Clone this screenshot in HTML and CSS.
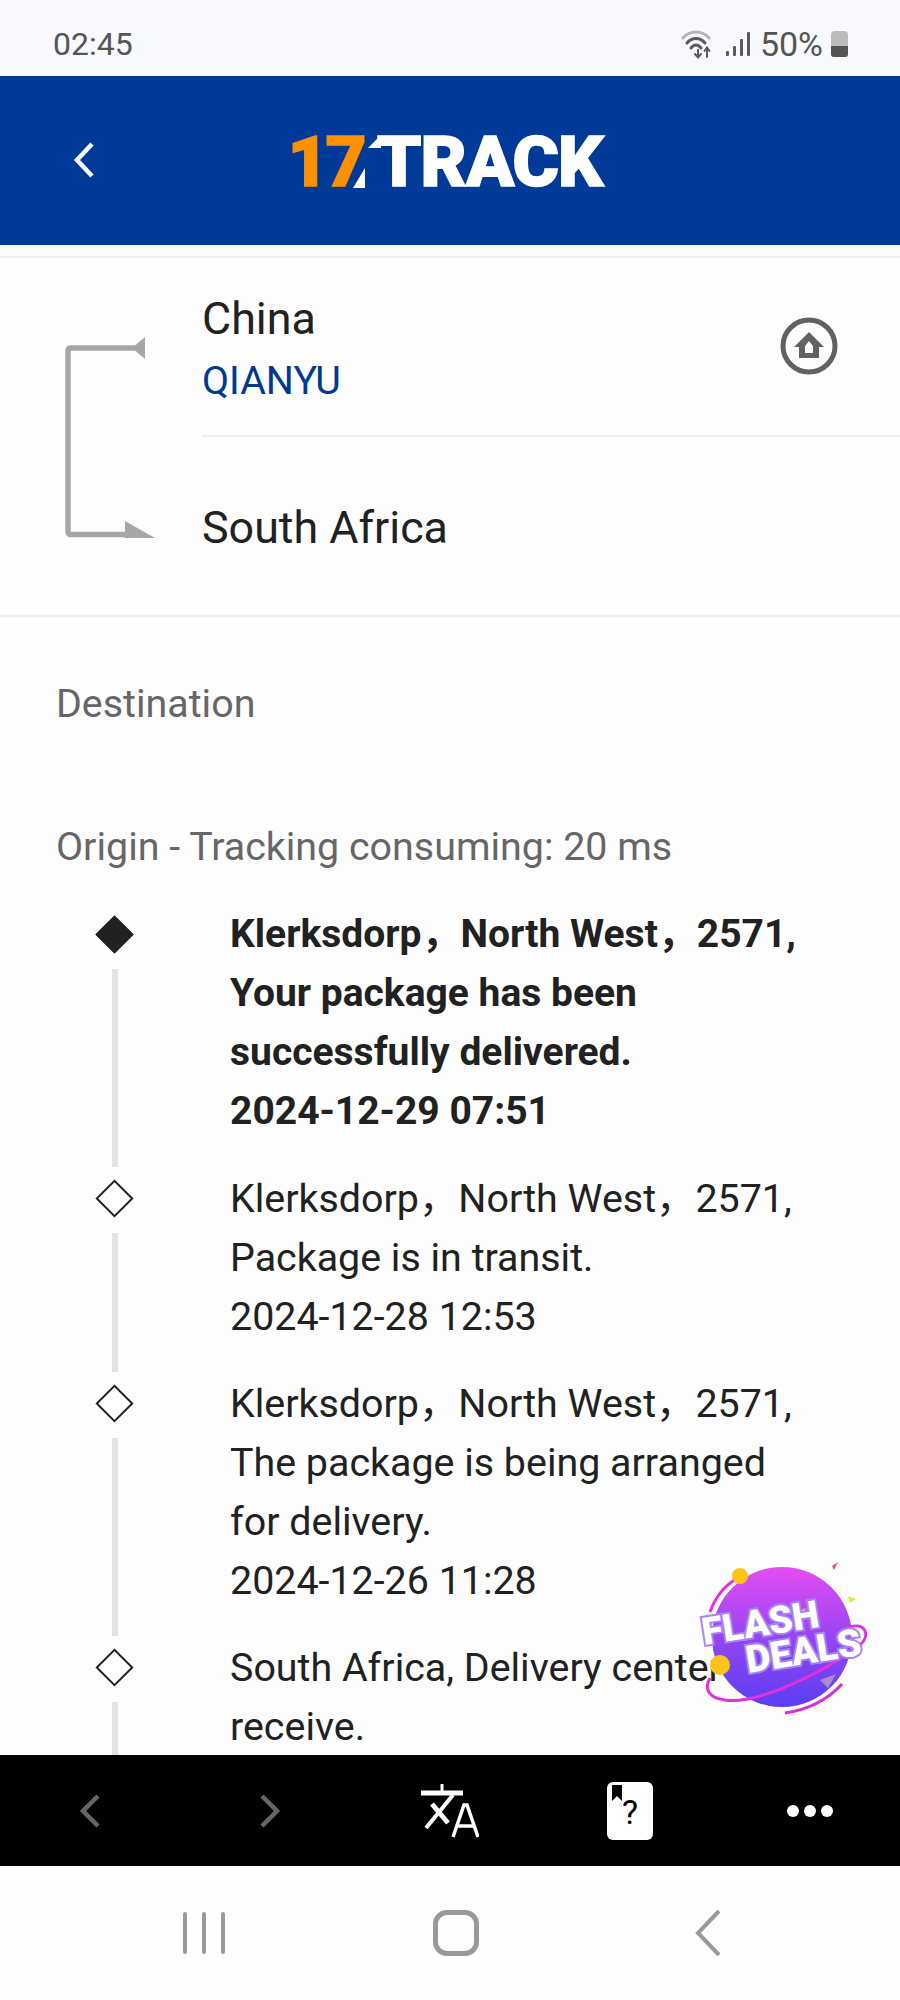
FILE: index.html
```html
<!DOCTYPE html>
<html lang="en">
<head>
    <meta charset="UTF-8">
    <meta name="viewport" content="width=device-width, initial-scale=1.0">
    <title>17TRACK</title>
    <link rel="stylesheet" href="styles.css">
</head>
<body>

<div class="app">
    <div class="status-bar">
        <span>02:45</span>
        <div class="status-icons">
            <svg class="wifi" width="36" height="30" viewBox="0 0 36 30" fill="none" stroke-linecap="round">
                <path d="M2 9 C9 1 21 1 28 9" stroke="#b5b5b5" stroke-width="3"/>
                <path d="M6 14 C11 8 19 8 24 14" stroke="#5a5a5a" stroke-width="3"/>
                <path d="M10 19 C13 15 17 15 20 19" stroke="#5a5a5a" stroke-width="3"/>
                <path d="M17 21 V28 M14 25 L17 28.5 L20 25" stroke="#5a5a5a" stroke-width="2"/>
                <path d="M26 28 V19 M23.5 22 L26 18.5 L28.5 22" stroke="#5a5a5a" stroke-width="2"/>
            </svg>
            <svg class="signal" width="24" height="24" viewBox="0 0 24 24" fill="#5a5a5a">
                <rect x="0" y="19" width="3" height="5" rx="1"/>
                <rect x="7" y="14" width="3" height="10" rx="1"/>
                <rect x="14" y="7" width="3" height="17" rx="1"/>
                <rect x="21" y="0" width="3" height="24" rx="1"/>
            </svg>
            <span>50%</span>
            <div class="battery"><div class="battery-level"></div></div>
        </div>
    </div>

    <header class="top-bar">
        <svg class="top-back" width="22" height="36" viewBox="0 0 22 36" fill="none" stroke="#fff" stroke-width="4.5">
            <path d="M19 2 L4 18 L19 34"/>
        </svg>
        <div class="logo">
            <span class="logo-num">17</span><svg class="logo-slash" width="28" height="52" viewBox="0 0 28 52" fill="#fff"><path d="M0 52 L12 32 V52 Z"/><path d="M15 12 L27 0 H28 V12 Z"/></svg><span class="logo-name">TRACK</span>
        </div>
    </header>

    <main class="content">
        <div class="top-rule"></div>

        <section class="route">
            <svg class="route-arrow" width="98" height="210" viewBox="0 0 98 210" fill="#a6a5a8">
                <path d="M80 16 H13 Q10 16 10 19 V199.5 Q10 202.5 13 202.5 H80" fill="none" stroke="#a6a5a8" stroke-width="5.5"/>
                <path d="M74 16 L87 5 V27 Z"/>
                <path d="M67 189 L97 206 H67 Z"/>
            </svg>
            <div class="route-rows">
                <div class="route-row route-origin">
                    <div>
                        <div class="country">China</div>
                        <div class="carrier">QIANYU</div>
                    </div>
                    <svg class="home-icon" width="58" height="58" viewBox="0 0 58 58">
                        <circle cx="29" cy="29" r="26" fill="none" stroke="#616161" stroke-width="5"/>
                        <path d="M29 15 L44 30 H39 V41 H19 V30 H14 Z M25 29 V36 H33 V29 L29 24 Z" fill="#616161" fill-rule="evenodd"/>
                    </svg>
                </div>
                <div class="route-row route-dest">
                    <div class="country">South Africa</div>
                </div>
            </div>
        </section>

        <section class="tracking">
            <p class="tracking-label">Destination</p>
            <p class="tracking-label tracking-origin">Origin - Tracking consuming: 20 ms</p>

            <div class="timeline">
                <div class="event event-latest">
                    <div class="event-marker">
                        <div class="diamond-box"><div class="diamond"></div></div>
                        <div class="event-line"></div>
                    </div>
                    <div class="event-text">
                        Klerksdorp，North West，2571, Your package has been successfully delivered.
                        <span class="event-date">2024-12-29 07:51</span>
                    </div>
                </div>
                <div class="event">
                    <div class="event-marker">
                        <div class="diamond-box"><div class="diamond"></div></div>
                        <div class="event-line"></div>
                    </div>
                    <div class="event-text">
                        Klerksdorp，North West，2571, Package is in transit.
                        <span class="event-date">2024-12-28 12:53</span>
                    </div>
                </div>
                <div class="event">
                    <div class="event-marker">
                        <div class="diamond-box"><div class="diamond"></div></div>
                        <div class="event-line"></div>
                    </div>
                    <div class="event-text">
                        Klerksdorp，North West，2571, The package is being arranged for delivery.
                        <span class="event-date">2024-12-26 11:28</span>
                    </div>
                </div>
                <div class="event">
                    <div class="event-marker">
                        <div class="diamond-box"><div class="diamond"></div></div>
                        <div class="event-line"></div>
                    </div>
                    <div class="event-text">
                        South Africa, Delivery center receive.
                    </div>
                </div>
            </div>
        </section>
    </main>

    <svg class="flash-badge" width="240" height="200" viewBox="0 0 240 200" fill="none">
        <defs>
            <linearGradient id="planet" x1="0" y1="0" x2="0" y2="1">
                <stop offset="0" stop-color="#e44df2"/>
                <stop offset="0.55" stop-color="#8e44f2"/>
                <stop offset="1" stop-color="#5a3ff2"/>
            </linearGradient>
        </defs>
        <circle cx="122" cy="107" r="70" fill="url(#planet)"/>
        <path d="M190 97 C205 92 211 105 200 115 C160 145 95 175 65 170 C48 168 44 158 50 148" stroke="#e62ee0" stroke-width="3"/>
        <path d="M78 48 C65 55 55 68 50 82" stroke="#e62ee0" stroke-width="3"/>
        <path d="M125 183 Q160 178 182 154" stroke="#d42ee0" stroke-width="3"/>
        <path d="M172 36 L178 32 L174 40 Z" fill="#e0506a"/>
        <path d="M188 66 L196 69 L190 73 Z" fill="#f0e040"/>
        <path d="M140 80 L146 78 L143 88 Z" fill="#f0b060"/>
        <path d="M160 150 L176 144 L168 158 Z" fill="#b08ac8"/>
        <g class="flash-text">
            <text x="44" y="115" transform="rotate(-9 44 115)">FLASH</text>
            <text x="88" y="143" transform="rotate(-9 88 143)">DEALS</text>
        </g>
        <circle cx="80" cy="46" r="8" fill="#fcc419"/>
        <circle cx="60" cy="135" r="10" fill="#fcc419"/>
    </svg>

    <div class="toolbar">
        <div class="tool">
            <svg width="20" height="34" viewBox="0 0 20 34" fill="none" stroke="#666" stroke-width="4.5"><path d="M18 2 L3 17 L18 32"/></svg>
        </div>
        <div class="tool">
            <svg width="20" height="34" viewBox="0 0 20 34" fill="none" stroke="#666" stroke-width="4.5"><path d="M2 2 L17 17 L2 32"/></svg>
        </div>
        <div class="tool">
            <svg width="58" height="54" viewBox="0 0 58 54" fill="none" stroke="#fff">
                <path d="M0 9 H42" stroke-width="5"/>
                <path d="M21 0 V8" stroke-width="3"/>
                <path d="M32 11 L5 44" stroke-width="4"/>
                <path d="M11 20 L27 39" stroke-width="5"/>
                <path d="M32 53 L43 21 H46 L57 53 M36 42 H53" stroke-width="3.5"/>
            </svg>
        </div>
        <div class="tool">
            <div class="help-card">
                <svg class="help-mark" width="10" height="16" viewBox="0 0 10 16" fill="#000"><path d="M0 0 H10 V16 L5 11 L0 16 Z"/></svg>
                <span>?</span>
            </div>
        </div>
        <div class="tool tool-dots">
            <i></i><i></i><i></i>
        </div>
    </div>

    <nav class="nav-bar">
        <div class="nav-item nav-recents"><i></i><i></i><i></i></div>
        <div class="nav-item"><div class="nav-home"></div></div>
        <div class="nav-item">
            <svg width="26" height="46" viewBox="0 0 26 46" fill="none" stroke="#999" stroke-width="4"><path d="M24 1 L3 23 L24 45"/></svg>
        </div>
    </nav>
</div>

</body>
</html>
```

FILE: styles.css
```css
body {
    margin: 0;
    font-family: Roboto, "Noto Sans CJK SC", sans-serif;
    background-color: #fdfdfe;
    color: #212121;
}
.app {
    position: relative;
    width: 900px;
    height: 2000px;
    display: flex;
    flex-direction: column;
    overflow: hidden;
}

/* status bar */
.status-bar {
    height: 76px;
    box-sizing: border-box;
    padding: 12px 52px 0 53px;
    flex-shrink: 0;
    display: flex;
    align-items: center;
    justify-content: space-between;
    background-color: #f8f9fd;
    color: #555;
    font-size: 32px;
}
.status-icons {
    display: flex;
    align-items: center;
    gap: 8px;
}
.status-icons span { font-size: 34px; }
.status-icons .signal { margin-left: 1px; margin-right: 2px; }
.battery {
    width: 17px;
    height: 26px;
    background-color: #bbb;
    border-radius: 4px 4px 3px 3px;
    overflow: hidden;
    display: flex;
    align-items: flex-end;
}
.battery-level {
    width: 100%;
    height: 11px;
    background-color: #555;
}

/* header */
.top-bar {
    height: 169px;
    flex-shrink: 0;
    position: relative;
    display: flex;
    align-items: center;
    justify-content: center;
    background-color: #003a99;
}
.top-back {
    position: absolute;
    left: 73px;
    top: 66px;
}
.logo {
    display: flex;
    align-items: center;
    height: 52px;
    margin: 2px 10px 0 0;
    font-weight: 900;
    font-size: 71px;
    line-height: 52px;
    color: #fff;
    -webkit-text-stroke: 1.5px currentColor;
}
.logo-num { color: #ff9000; letter-spacing: -3px; }
.logo-slash { margin-left: -11px; flex-shrink: 0; }
.logo-name { margin-left: -4px; letter-spacing: -1px; }

/* content */
.content {
    flex: 1;
    min-height: 0;
    overflow: hidden;
}
.top-rule {
    margin-top: 11px;
    height: 2px;
    background-color: #eeeeee;
}
.route {
    display: flex;
    height: 357px;
    border-bottom: 2px solid #eeeeee;
}
.route-arrow {
    margin: 74px 0 0 58px;
    flex-shrink: 0;
}
.route-rows {
    flex: 1;
    margin-left: 46px;
}
.route-row {
    display: flex;
    align-items: flex-start;
    justify-content: space-between;
}
.route-origin {
    height: 179px;
    padding: 36px 62px 0 0;
    box-sizing: border-box;
    border-bottom: 2px solid #eeeeee;
}
.route-dest {
    padding-top: 66px;
}
.country {
    font-size: 44.8px;
    line-height: 50px;
}
.carrier {
    margin-top: 12px;
    font-size: 39.4px;
    line-height: 50px;
    color: #003a8c;
}
.home-icon { margin-top: 23px; }

/* tracking list */
.tracking { padding-top: 62px; }
.tracking-label {
    margin: 0;
    padding-left: 56px;
    font-size: 39.4px;
    line-height: 50px;
    color: #666;
}
.tracking-origin { margin-top: 93px; }
.timeline { margin-top: 33px; }
.event { display: flex; }
.event-marker {
    width: 39px;
    margin-left: 95px;
    flex-shrink: 0;
    display: flex;
    flex-direction: column;
    align-items: center;
}
.diamond-box {
    height: 59px;
    display: flex;
    align-items: center;
    flex-shrink: 0;
}
.diamond {
    width: 27px;
    height: 27px;
    box-sizing: border-box;
    border: 2.5px solid #212121;
    background-color: #fff;
    transform: rotate(45deg);
}
.event-latest .diamond { background-color: #212121; }
.event-line {
    flex: 1;
    width: 6px;
    margin: 5px 0 2px 1px;
    background-color: #e2e2e4;
}
.event-text {
    margin-left: 96px;
    width: 580px;
    padding-bottom: 28px;
    font-size: 39.4px;
    line-height: 59px;
}
.event-latest .event-text { font-weight: 700; font-size: 39px; }
.event-date { display: block; }

/* flash deals badge */
.flash-badge {
    position: absolute;
    left: 660px;
    top: 1530px;
}
.flash-text text {
    font-family: Roboto, sans-serif;
    font-size: 38px;
    font-weight: 900;
    fill: #fff;
    stroke: #a684f5;
    stroke-width: 4px;
    paint-order: stroke;
}

/* black toolbar */
.toolbar {
    height: 111px;
    flex-shrink: 0;
    display: flex;
    background-color: #000;
}
.tool {
    flex: 1;
    display: flex;
    align-items: center;
    justify-content: center;
}
.help-card {
    position: relative;
    width: 46px;
    height: 58px;
    background-color: #fff;
    border-radius: 6px;
    color: #000;
    text-align: center;
    font-size: 34px;
    line-height: 60px;
}
.help-mark {
    position: absolute;
    left: 5px;
    top: 3px;
}
.tool-dots { gap: 5px; }
.tool-dots i {
    width: 12px;
    height: 12px;
    background-color: #fff;
    border-radius: 50%;
}

/* system nav */
.nav-bar {
    height: 134px;
    flex-shrink: 0;
    display: grid;
    grid-template-columns: repeat(3, 252px);
    justify-content: center;
    padding-left: 12px;
    box-sizing: border-box;
    background-color: #fdfdfd;
}
.nav-item {
    display: flex;
    align-items: center;
    justify-content: center;
}
.nav-recents { gap: 15px; }
.nav-recents i {
    width: 4px;
    height: 42px;
    background-color: #999;
    border-radius: 2px;
}
.nav-home {
    width: 36px;
    height: 36px;
    border: 5px solid #999;
    border-radius: 14px;
}
```
